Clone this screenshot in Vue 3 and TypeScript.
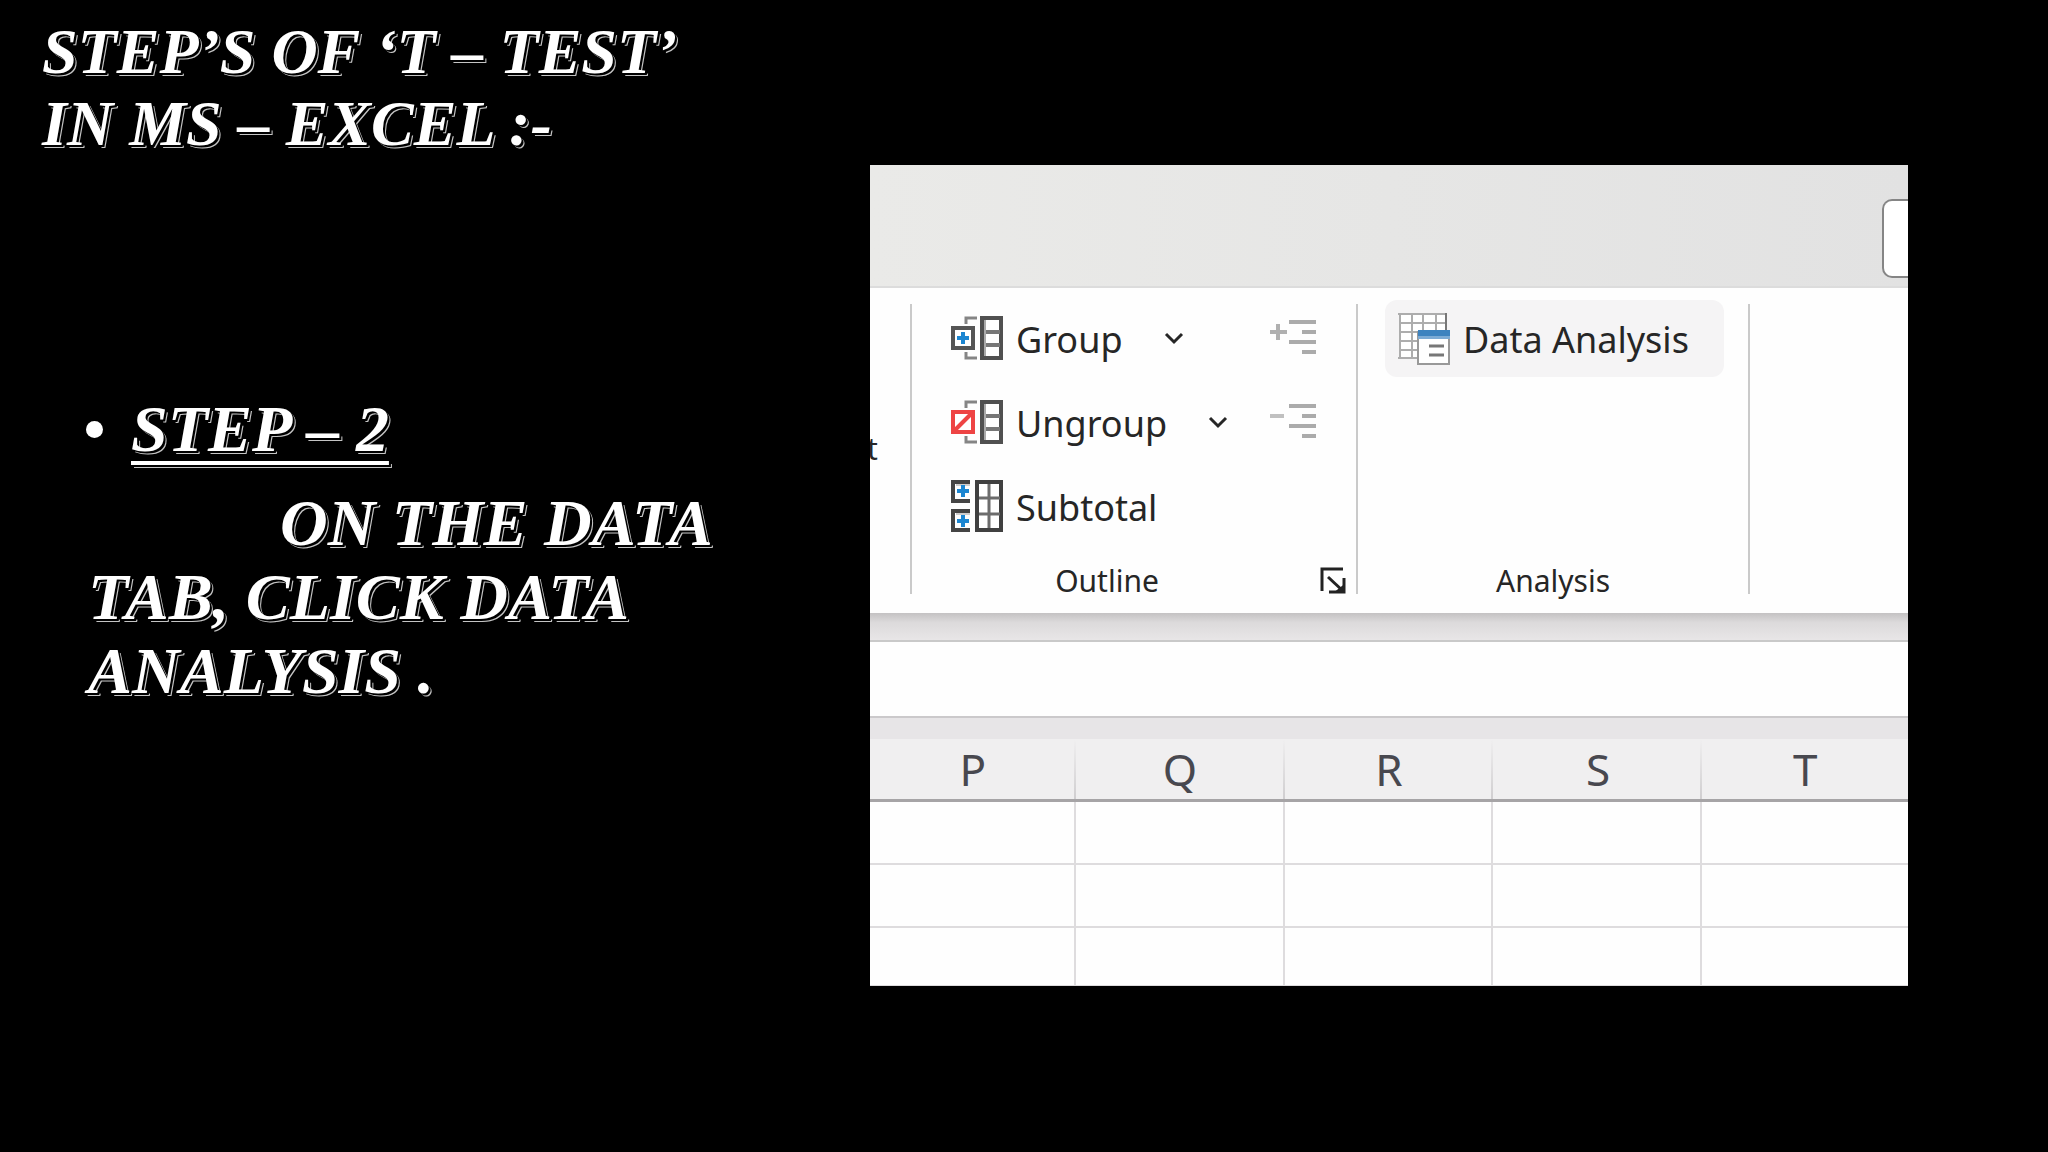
<script setup lang="ts">
const columns: string[] = ['P', 'Q', 'R', 'S', 'T']
const rows: number[] = [1, 2, 3]
</script>

<template>
  <main class="slide">
    <section class="notes">
      <h1>STEP’S OF ‘T – TEST’<br />IN MS – EXCEL :-</h1>
      <ul>
        <li><span class="bullet"></span><span class="step">STEP – 2</span></li>
      </ul>
      <p>ON THE DATA<br />TAB, CLICK DATA<br />ANALYSIS .</p>
    </section>

    <section class="excel">
      <header class="titlebar"><div class="search"></div></header>

      <div class="ribbon">
        <div class="group cut"><span>t</span></div>

        <div class="group outline">
          <div class="row">
            <button class="cmd" type="button">
              <svg width="52" height="44" viewBox="0 0 52 44" fill="none">
                <path d="M15 8V2H26M15 36V42H26" stroke="#858585" stroke-width="3" />
                <rect x="2" y="12" width="20" height="20" fill="#fff" stroke="#555" stroke-width="4" />
                <path d="M12 16V28M6 22H18" stroke="#1c86d1" stroke-width="4" />
                <rect x="31" y="2" width="19" height="40" fill="#fff" stroke="#505050" stroke-width="4" />
                <path d="M33 16H49M33 29H49" stroke="#777" stroke-width="4" />
                <path d="M34 4V40" stroke="#aaa" stroke-width="2" />
              </svg>
              <span>Group</span>
              <svg class="chevron" width="20" height="14" viewBox="0 0 20 14" fill="none">
                <path d="M2 3L10 11L18 3" stroke="#262626" stroke-width="3" />
              </svg>
            </button>
            <button class="detail" type="button" aria-label="Show Detail">
              <svg width="48" height="38" viewBox="0 0 48 38" fill="none">
                <path d="M9 5V21M1 13H18" stroke="#b0b0b0" stroke-width="4" />
                <path d="M20 3H47M33 13H47M20 23H47M33 33H47" stroke="#ababab" stroke-width="4" />
              </svg>
            </button>
          </div>

          <div class="row">
            <button class="cmd" type="button">
              <svg width="52" height="44" viewBox="0 0 52 44" fill="none">
                <path d="M15 8V2H26M15 36V42H26" stroke="#858585" stroke-width="3" />
                <rect x="2" y="12" width="20" height="20" fill="#fff" stroke="#ee4444" stroke-width="4" />
                <path d="M4 30L20 14" stroke="#ee4444" stroke-width="4" />
                <rect x="31" y="2" width="19" height="40" fill="#fff" stroke="#505050" stroke-width="4" />
                <path d="M33 16H49M33 29H49" stroke="#777" stroke-width="4" />
                <path d="M34 4V40" stroke="#aaa" stroke-width="2" />
              </svg>
              <span>Ungroup</span>
              <svg class="chevron" width="20" height="14" viewBox="0 0 20 14" fill="none">
                <path d="M2 3L10 11L18 3" stroke="#262626" stroke-width="3" />
              </svg>
            </button>
            <button class="detail" type="button" aria-label="Hide Detail">
              <svg width="48" height="38" viewBox="0 0 48 38" fill="none">
                <path d="M1 13H15" stroke="#c0c0c0" stroke-width="4" />
                <path d="M20 3H47M33 13H47M20 23H47M33 33H47" stroke="#ababab" stroke-width="4" />
              </svg>
            </button>
          </div>

          <div class="row">
            <button class="cmd" type="button">
              <svg width="52" height="52" viewBox="0 0 52 52" fill="none">
                <path d="M19 2H2V21H19M19 31H2V50H19" stroke="#444" stroke-width="4" />
                <path d="M5 5H19M5 34H19" stroke="#ccc" stroke-width="2" />
                <path d="M12 5V17M6 11H18M12 35V47M6 41H18" stroke="#1c86d1" stroke-width="4" />
                <rect x="26" y="2" width="24" height="48" fill="#fff" stroke="#404040" stroke-width="4" />
                <path d="M38 4V48M28 18H49M28 34H49" stroke="#6c6c6c" stroke-width="3" />
              </svg>
              <span>Subtotal</span>
            </button>
          </div>

          <footer>
            <span class="caption">Outline</span>
            <button class="launcher" type="button" aria-label="Outline settings">
              <svg width="26" height="27" viewBox="0 0 26 27" fill="none" stroke="#222" stroke-width="3">
                <path d="M2 24V2H23" />
                <path d="M8 10L23 24" />
                <path d="M24 11V25H9" />
                <path d="M23 20V24H18Z" fill="#222" />
              </svg>
            </button>
          </footer>
        </div>

        <div class="group analysis">
          <button class="cmd active" type="button">
            <svg width="52" height="54" viewBox="0 0 52 54" fill="none">
              <rect x="1" y="1" width="48" height="46" fill="#fff" />
              <path d="M0 2H49M1 11H49M1 20H20M1 29H20M1 38H20M0 46H20" stroke="#adadad" stroke-width="2" />
              <path d="M2 1V47M14 1V46M25 1V18M38 1V18" stroke="#adadad" stroke-width="2" />
              <path d="M48 1V18" stroke="#777" stroke-width="2" />
              <rect x="20" y="20" width="31" height="32" fill="#fff" stroke="#999" stroke-width="2" />
              <rect x="20" y="18" width="32" height="6" fill="#3d83bf" />
              <rect x="20" y="24" width="32" height="3" fill="#7cabd5" />
              <path d="M31 34H46M31 43H46" stroke="#777" stroke-width="3" />
            </svg>
            <span>Data Analysis</span>
          </button>
          <footer><span class="caption">Analysis</span></footer>
        </div>
      </div>

      <div class="shade"></div>
      <div class="formula"></div>
      <div class="band"></div>

      <table>
        <colgroup>
          <col class="edge" />
          <col span="3" />
          <col class="edge" />
        </colgroup>
        <thead>
          <tr><th v-for="c in columns" :key="c" scope="col">{{ c }}</th></tr>
        </thead>
        <tbody>
          <tr v-for="r in rows" :key="r"><td v-for="c in columns" :key="c"></td></tr>
        </tbody>
      </table>
    </section>
  </main>
</template>

<style>
body {
  margin: 0;
  background: #000;
}
</style>

<style scoped>
* {
  box-sizing: border-box;
}
.slide {
  display: grid;
  grid-template-columns: minmax(0, 870fr) minmax(0, 1038fr) minmax(0, 140fr);
  align-items: start;
  min-height: 100vh;
  background: #000;
}
.notes {
  padding-top: 16px;
  color: #fff;
  font: italic bold 66px/74px 'Liberation Serif', serif;
  text-shadow: 2px 2px 0 #000, 3px 3px 0 #c4c4c4;
  white-space: nowrap;
}
h1 {
  margin: 0 0 232px;
  padding-left: 42px;
  font: inherit;
  font-size: 64px;
  line-height: 72px;
}
ul {
  margin: 0 0 20px;
  padding: 0 0 0 86px;
  list-style: none;
}
li {
  display: flex;
  align-items: center;
}
.bullet {
  width: 17px;
  height: 17px;
  margin-right: 28px;
  border-radius: 50%;
  background: #fff;
}
.step {
  text-decoration: underline 4px;
  text-underline-offset: 10px;
  text-decoration-skip-ink: none;
}
.notes p {
  margin: 0;
  padding-left: 88px;
  text-indent: 192px;
}
.excel {
  margin-top: 165px;
  overflow: hidden;
  background: #fefefe;
  color: #262626;
  font-family: 'Noto Sans', sans-serif;
}
.titlebar {
  display: flex;
  justify-content: flex-end;
  align-items: center;
  height: 123px;
  padding-top: 26px;
  background: linear-gradient(90deg, #eaeae8, #e2e2e2);
  border-bottom: 2px solid #dcdcdc;
}
.search {
  width: 26px;
  height: 79px;
  border: 2px solid #858585;
  border-right: 0;
  border-radius: 10px 0 0 10px;
  background: #fff;
}
.ribbon {
  display: grid;
  grid-template-columns: 42fr 446fr 392fr 158fr;
  padding: 16px 0 19px;
}
.group {
  display: flex;
  flex-direction: column;
  gap: 16px;
  height: 290px;
  min-width: 0;
  border-right: 2px solid #cacaca;
}
.cut {
  justify-content: center;
  overflow: hidden;
  font-size: 30px;
  line-height: 36px;
}
.cut span {
  margin-left: -3px;
}
.row {
  display: flex;
  align-items: center;
  justify-content: space-between;
  height: 68px;
  padding: 0 39px;
}
button {
  display: flex;
  align-items: center;
  padding: 0;
  border: 0;
  background: none;
  color: inherit;
  font: inherit;
}
svg {
  flex: none;
}
.cmd {
  gap: 13px;
  font-size: 36px;
  white-space: nowrap;
}
.cmd span {
  padding-top: 2px;
}
.chevron {
  margin-left: 28px;
}
.active {
  height: 77px;
  margin: -4px 24px -5px 27px;
  padding-left: 13px;
  border-radius: 12px;
  background: #f5f4f5;
}
footer {
  display: flex;
  align-items: flex-end;
  gap: 18px;
  margin-top: auto;
}
.caption {
  flex: 1;
  font-size: 30px;
  line-height: 26px;
  text-align: center;
}
.launcher {
  margin-right: 10px;
}
.shade {
  height: 29px;
  background: linear-gradient(#c4c2c3, #dcdadb 35%, #e8e6e7);
  border-bottom: 2px solid #c9c9c9;
}
.formula {
  height: 74px;
}
.band {
  height: 23px;
  border-top: 2px solid #cbc9cb;
  background: #e7e5e7;
}
table {
  width: 100%;
  table-layout: fixed;
  border-collapse: separate;
  border-spacing: 0;
}
.edge {
  width: 19.8%;
}
th {
  height: 63px;
  padding: 0;
  border-bottom: 3px solid #a6a4a6;
  background: linear-gradient(#f0eff000, #d0ced0) right / 2px 100% no-repeat #f0eff0;
  color: #48484f;
  font-size: 44px;
  font-weight: 400;
  line-height: 60px;
}
td {
  height: 63px;
  padding: 0;
  border-right: 2px solid #dedcde;
  border-bottom: 2px solid #dedcde;
}
th:last-child {
  background: #f0eff0;
}
td:last-child {
  border-right: 0;
}
tbody tr:last-child td {
  height: 58px;
  border-bottom-width: 1px;
}
</style>
